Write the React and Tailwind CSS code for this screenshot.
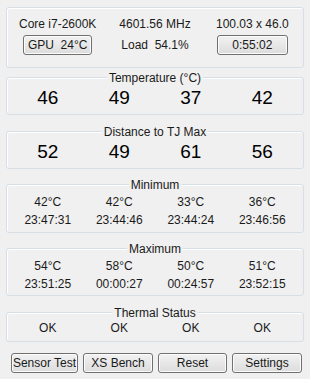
const cols = 'grid grid-cols-4 text-center'

function Group({ title, className, children }) {
  return (
    <div className={`relative mx-[6px] rounded-[3px] border border-[#d5dfe5] shadow-[inset_1px_1px_0_#ffffff] ${className}`}>
      <span className="absolute left-1/2 top-0 -translate-x-1/2 -translate-y-1/2 bg-[#f0f0f0] px-[2px] leading-[14px] whitespace-nowrap">
        {title}
      </span>
      {children}
    </div>
  )
}

function Btn({ children, className }) {
  return (
    <button className={`h-[20px] rounded-[3px] border border-[#707070] bg-gradient-to-b from-[#f2f2f2] to-[#dcdcdc] shadow-[inset_0_0_0_1px_#fcfcfc] leading-none text-[#1a1a1a] ${className}`}>
      {children}
    </button>
  )
}

const temps = ['46', '49', '37', '42']
const dist = ['52', '49', '61', '56']
const mins = [['42°C', '23:47:31'], ['42°C', '23:44:46'], ['33°C', '23:44:24'], ['36°C', '23:46:56']]
const maxs = [['54°C', '23:51:25'], ['58°C', '00:00:27'], ['50°C', '00:24:57'], ['51°C', '23:52:15']]

export default function App() {
  return (
    <div className="w-[310px] h-[379px] overflow-hidden bg-[#f0f0f0] pt-[7px] text-[12px] text-[#1a1a1a] font-['Liberation_Sans',Arial,sans-serif]">
      {/* header */}
      <div className="mx-[6px] h-[61px] rounded-[3px] border border-[#d5dfe5] shadow-[inset_1px_1px_0_#ffffff] px-[2px] pt-[8px]">
        <div className="grid grid-cols-3 text-center leading-[16px]">
          <span>Core i7-2600K</span>
          <span>4601.56 MHz</span>
          <span>100.03 x 46.0</span>
        </div>
        <div className="mt-[3px] grid grid-cols-3 items-center text-center">
          <div className="flex justify-center">
            <Btn className="w-[69px]">GPU&nbsp;&nbsp;24°C</Btn>
          </div>
          <span>Load&nbsp;&nbsp;54.1%</span>
          <div className="flex justify-center">
            <Btn className="w-[71px]">0:55:02</Btn>
          </div>
        </div>
      </div>

      <Group title="Temperature (°C)" className="mt-[9px] h-[38px]">
        <div className={`${cols} px-[5px] pt-[9px] text-[19px] leading-[22px] text-black`}>
          {temps.map((t, i) => <span key={i}>{t}</span>)}
        </div>
      </Group>

      <Group title="Distance to TJ Max" className="mt-[16px] h-[38px]">
        <div className={`${cols} px-[5px] pt-[9px] text-[19px] leading-[22px] text-black`}>
          {dist.map((t, i) => <span key={i}>{t}</span>)}
        </div>
      </Group>

      <Group title="Minimum" className="mt-[15px] h-[49px]">
        <div className={`${cols} px-[5px] pt-[8px] leading-[18px]`}>
          {mins.map(([t, s], i) => (
            <div key={i} className="flex flex-col">
              <span>{t}</span>
              <span>{s}</span>
            </div>
          ))}
        </div>
      </Group>

      <Group title="Maximum" className="mt-[15px] h-[48px]">
        <div className={`${cols} px-[5px] pt-[8px] leading-[18px]`}>
          {maxs.map(([t, s], i) => (
            <div key={i} className="flex flex-col">
              <span>{t}</span>
              <span>{s}</span>
            </div>
          ))}
        </div>
      </Group>

      <Group title="Thermal Status" className="mt-[16px] h-[30px]">
        <div className={`${cols} px-[5px] pt-[7px] leading-[16px]`}>
          {['OK', 'OK', 'OK', 'OK'].map((t, i) => <span key={i}>{t}</span>)}
        </div>
      </Group>

      <div className="mt-[11px] flex gap-[5px] pl-[11px]">
        <Btn className="w-[67px]">Sensor Test</Btn>
        <Btn className="w-[70px]">XS Bench</Btn>
        <Btn className="w-[69px]">Reset</Btn>
        <Btn className="w-[70px]">Settings</Btn>
      </div>
    </div>
  )
}
